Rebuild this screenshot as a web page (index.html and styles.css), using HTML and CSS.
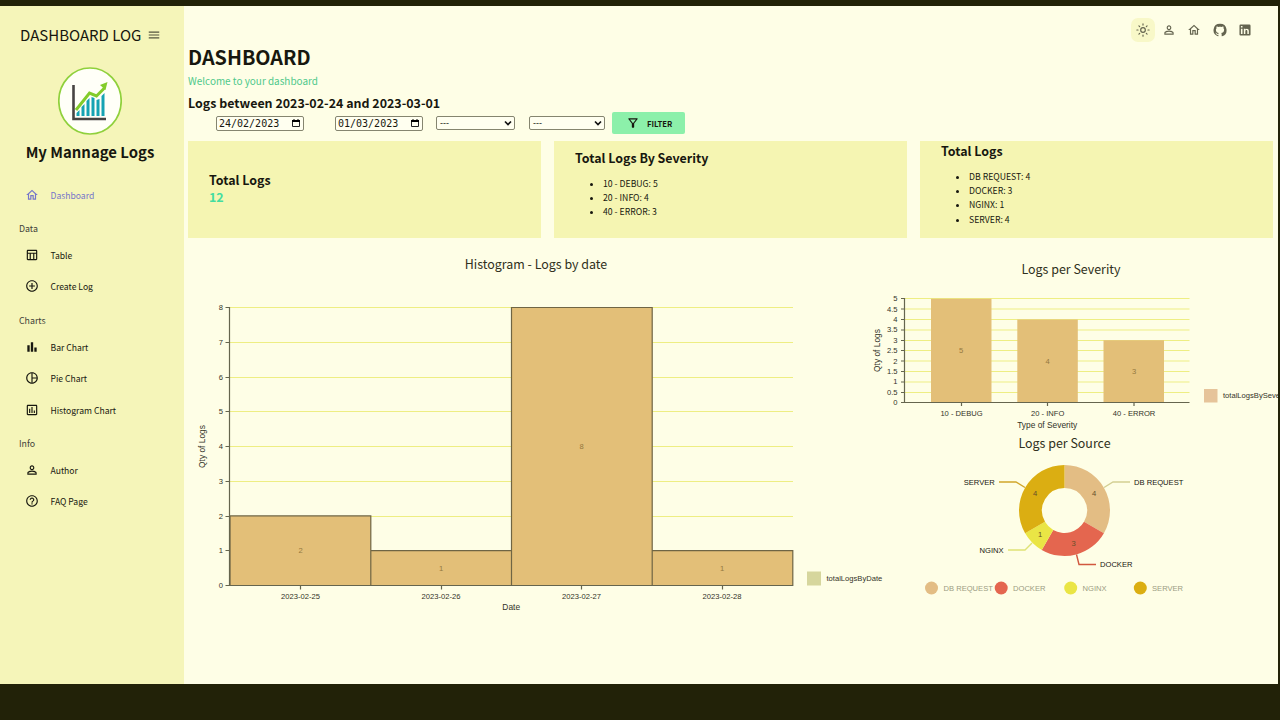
FILE: index.html
```html
<!DOCTYPE html>
<html lang="en">
<head>
<meta charset="utf-8">
<title>Dashboard Log</title>
<link rel="stylesheet" href="styles.css">
</head>
<body>
<svg class="defs" width="0" height="0">
  <symbol id="home" viewBox="0 0 24 24"><path d="m12 5.69 5 4.5V18h-2v-6H9v6H7v-7.81l5-4.5M12 3 2 12h3v8h6v-6h2v6h6v-8h3L12 3z"/></symbol>
  <symbol id="person" viewBox="0 0 24 24"><path d="M12 5.9a2.1 2.1 0 1 1 0 4.2 2.1 2.1 0 0 1 0-4.2m0 9c2.97 0 6.1 1.46 6.1 2.1v1.1H5.9V17c0-.64 3.13-2.1 6.1-2.1M12 4C9.79 4 8 5.79 8 8s1.79 4 4 4 4-1.79 4-4-1.79-4-4-4zm0 9c-2.67 0-8 1.34-8 4v3h16v-3c0-2.66-5.33-4-8-4z"/></symbol>
</svg>
<div class="screen">
  <aside class="sidebar">
    <div class="brand"><span>DASHBOARD LOG</span>
      <svg class="icon burger" viewBox="0 0 24 24"><path d="M3 18h18v-2H3v2zm0-5h18v-2H3v2zm0-7v2h18V6H3z"/></svg>
    </div>
    <svg class="logo" viewBox="0 0 64 68">
      <ellipse cx="32" cy="34" rx="31.2" ry="33" fill="#fffff8" stroke="#8fd03c" stroke-width="1.7"/>
      <path d="M15.5 18v34H48" fill="none" stroke="#474443" stroke-width="2.6"/>
      <path d="M18.5 46l3-3v6h-3zM23.500 40l3-3v12h-3zM28.500 34l3-3v18h-3zM33.500 30l3 1v18h-3zM38.500 33l3-1v17h-3zM43.500 29l3-3v23h-3z" fill="#16a3b3"/>
      <path d="M18 43 31.500 26l7 3 8-8" fill="none" stroke="#83cc2b" stroke-width="3"/>
      <path d="m42 18 7.500-3-2 8z" fill="#83cc2b"/>
    </svg>
    <div class="owner">My Mannage Logs</div>
    <nav class="menu">
      <a class="item active"><svg class="icon"><use href="#home"/></svg>Dashboard</a>
      <h6>Data</h6>
      <a class="item"><svg class="icon" viewBox="0 0 24 24"><path d="M19 3H5c-1.100 0-2 .9-2 2v14c0 1.100.9 2 2 2h14c1.100 0 2-.9 2-2V5c0-1.100-.9-2-2-2zm0 2v3H5V5h14zm-9 14v-9h4v9h-4zm-5-9h3v9H5v-9zm11 9v-9h3v9h-3z"/></svg>Table</a>
      <a class="item"><svg class="icon" viewBox="0 0 24 24"><path d="M13 7h-2v4H7v2h4v4h2v-4h4v-2h-4V7zm-1-5C6.480 2 2 6.480 2 12s4.480 10 10 10 10-4.480 10-10S17.520 2 12 2zm0 18c-4.410 0-8-3.590-8-8s3.590-8 8-8 8 3.590 8 8-3.590 8-8 8z"/></svg>Create Log</a>
      <h6>Charts</h6>
      <a class="item"><svg class="icon" viewBox="0 0 24 24"><path d="M4 9h4v11H4zm12 4h4v7h-4zm-6-9h4v16h-4z"/></svg>Bar Chart</a>
      <a class="item"><svg class="icon" viewBox="0 0 24 24"><path d="M12 2C6.480 2 2 6.480 2 12s4.480 10 10 10 10-4.480 10-10S17.520 2 12 2zm1 2.070c3.610.45 6.480 3.330 6.930 6.930H13V4.070zM4 12c0-4.060 3.070-7.440 7-7.930v15.870c-3.930-.5-7-3.880-7-7.940zm9 7.930V13h6.930c-.45 3.610-3.320 6.480-6.930 6.930z"/></svg>Pie Chart</a>
      <a class="item"><svg class="icon" viewBox="0 0 24 24"><path d="M9 17H7v-7h2v7zm4 0h-2V7h2v10zm4 0h-2v-4h2v4zm2 2H5V5h14v14zm0-16H5c-1.100 0-2 .9-2 2v14c0 1.100.9 2 2 2h14c1.100 0 2-.9 2-2V5c0-1.100-.9-2-2-2z"/></svg>Histogram Chart</a>
      <h6>Info</h6>
      <a class="item"><svg class="icon"><use href="#person"/></svg>Author</a>
      <a class="item"><svg class="icon" viewBox="0 0 24 24"><path d="M11 18h2v-2h-2v2zm1-16C6.480 2 2 6.480 2 12s4.480 10 10 10 10-4.480 10-10S17.520 2 12 2zm0 18c-4.410 0-8-3.590-8-8s3.590-8 8-8 8 3.590 8 8-3.590 8-8 8zm0-14c-2.210 0-4 1.790-4 4h2c0-1.100.9-2 2-2s2 .9 2 2c0 2-3 1.750-3 5h2c0-2.250 3-2.500 3-5 0-2.210-1.790-4-4-4z"/></svg>FAQ Page</a>
    </nav>
  </aside>
  <main class="content">
    <div class="topbar">
      <span class="tool on"><svg class="icon" viewBox="0 0 24 24" fill="none" stroke="currentColor" stroke-width="2" stroke-linecap="round"><circle cx="12" cy="12" r="4"/><path d="M12 1.500v2M12 20.500v2M1.500 12h2M20.500 12h2M5 5l1.300 1.300M17.700 17.700 19 19M5 19l1.300-1.300M17.700 6.300 19 5"/></svg></span>
      <span class="tool"><svg class="icon"><use href="#person"/></svg></span>
      <span class="tool"><svg class="icon"><use href="#home"/></svg></span>
      <span class="tool"><svg class="icon" viewBox="0 0 24 24"><path d="M12 1.270a11 11 0 0 0-3.480 21.460c.55.090.73-.28.73-.55v-1.840c-3.030.64-3.670-1.460-3.670-1.460-.55-1.290-1.280-1.650-1.280-1.650-.92-.65.1-.65.1-.65 1.100 0 1.730 1.100 1.730 1.100.92 1.650 2.570 1.200 3.210.92a2 2 0 0 1 .64-1.470c-2.470-.27-5.040-1.190-5.040-5.500 0-1.100.46-2.100 1.200-2.840a3.760 3.760 0 0 1 0-2.930s.91-.28 3.110 1.100c1.800-.49 3.700-.49 5.500 0 2.100-1.380 3.020-1.100 3.020-1.100a3.760 3.760 0 0 1 .1 2.930c.83.74 1.200 1.740 1.200 2.940 0 4.210-2.570 5.130-5.040 5.400.45.370.82.920.82 2.020v3.030c0 .27.1.64.73.550A11 11 0 0 0 12 1.270"/></svg></span>
      <span class="tool"><svg class="icon" viewBox="0 0 24 24"><path fill-rule="evenodd" d="M4.500 2.500h15a2 2 0 0 1 2 2v15a2 2 0 0 1-2 2h-15a2 2 0 0 1-2-2v-15a2 2 0 0 1 2-2zM5 10v9h2.700v-9zM5 5v2.700h2.700V5zm5 5v9h2.600v-5c0-2.600 3.400-2.600 3.400 0v5h2.600v-5.500c0-4-4.300-4.600-6-2.400V10z"/></svg></span>
    </div>
    <h1>DASHBOARD</h1>
    <p class="welcome">Welcome to your dashboard</p>
    <h2>Logs between 2023-02-24 and 2023-03-01</h2>
    <div class="filters">
      <div class="date"><span>24/02/2023</span><svg viewBox="0 0 8 8"><path d="M.5 1.500h7v6h-7z" fill="none" stroke="#222"/><path d="M0 1h8v2H0zM1.500 0h1v1h-1zM5.500 0h1v1h-1z"/></svg></div>
      <div class="date second"><span>01/03/2023</span><svg viewBox="0 0 8 8"><path d="M.5 1.500h7v6h-7z" fill="none" stroke="#222"/><path d="M0 1h8v2H0zM1.500 0h1v1h-1zM5.500 0h1v1h-1z"/></svg></div>
      <div class="select wide"><span>---</span><svg viewBox="0 0 8 6"><path d="m1 1.500 3 3 3-3" fill="none" stroke="#111" stroke-width="1.700"/></svg></div>
      <div class="select"><span>---</span><svg viewBox="0 0 8 6"><path d="m1 1.500 3 3 3-3" fill="none" stroke="#111" stroke-width="1.700"/></svg></div>
      <div class="button"><svg class="icon" viewBox="0 0 24 24"><path d="M7 6h10l-5.010 6.300L7 6zm-2.750-.390C6.270 8.200 10 13 10 13v6c0 .55.45 1 1 1h2c.55 0 1-.45 1-1v-6s3.720-4.800 5.740-7.390c.51-.66.040-1.610-.79-1.610H5.040c-.83 0-1.300.95-.79 1.610z"/></svg>FILTER</div>
    </div>
    <section class="cards">
      <div class="card"><h3>Total Logs</h3><b class="count">12</b></div>
      <div class="card"><h3>Total Logs By Severity</h3><ul><li>10 - DEBUG: 5</li><li>20 - INFO: 4</li><li>40 - ERROR: 3</li></ul></div>
      <div class="card"><h3>Total Logs</h3><ul><li>DB REQUEST: 4</li><li>DOCKER: 3</li><li>NGINX: 1</li><li>SERVER: 4</li></ul></div>
    </section>
    <section class="charts">
      <div class="histogram">
        <h4>Histogram - Logs by date</h4>
        <svg class="plot" width="680" height="347" viewBox="188 273 680 347">
          <path class="grid" d="M230 307.500h563M230 342.500h563M230 377.500h563M230 411.500h563M230 446.500h563M230 481.500h563M230 516.500h563M230 550.500h563"/>
          <g class="bars outlined"><path d="M230 515.900h140.800v69.600H230zM370.800 550.700h140.700v34.800H370.800zM511.500 307.500h140.700v278H511.500zM652.200 550.700h140.600v34.800H652.200z"/></g>
          <path class="axis" d="M229.500 307v278.500H793M225.500 307.500h4M225.500 342.500h4M225.500 377.500h4M225.500 411.500h4M225.500 446.500h4M225.500 481.500h4M225.500 516.500h4M225.500 550.500h4M225.500 585.500h4M300.500 586v3.500M441.500 586v3.500M581.500 586v3.500M722.500 586v3.500"/>
          <g class="end"><text x="223" y="310.200">8</text><text x="223" y="345">7</text><text x="223" y="379.800">6</text><text x="223" y="414.400">5</text><text x="223" y="449.200">4</text><text x="223" y="484">3</text><text x="223" y="518.800">2</text><text x="223" y="553.400">1</text><text x="223" y="588.200">0</text></g>
          <g class="mid"><text x="300.500" y="599">2023-02-25</text><text x="441" y="599">2023-02-26</text><text x="581.500" y="599">2023-02-27</text><text x="722" y="599">2023-02-28</text></g>
          <g class="mid value"><text x="300.500" y="553.200">2</text><text x="441" y="570.700">1</text><text x="581.500" y="449.200">8</text><text x="722" y="570.700">1</text></g>
          <g class="mid legend"><text x="511.200" y="610">Date</text><text transform="translate(205 446.500) rotate(-90)">Qty of Logs</text></g>
          <path fill="#d6d69d" d="M807 571.500h14v14h-14z"/><text x="826.500" y="581.200">totalLogsByDate</text>
        </svg>
      </div>
      <div class="side">
        <h4>Logs per Severity</h4>
        <svg class="plot" width="410" height="156" viewBox="868 278 410 156">
          <path class="grid" d="M905 298.500h284.500M905 309h284.500M905 319.500h284.500M905 330h284.500M905 340.500h284.500M905 350.500h284.500M905 361h284.500M905 371.500h284.500M905 382h284.500M905 392.500h284.500"/>
          <g class="bars"><path d="M931 298.800h60.500v104H931zM1017.300 319.500h60.500v83.300h-60.500zM1103.500 340.300h60.500v62.500h-60.500z"/></g>
          <path class="axis" d="M904.500 298v104.500h285M901 298.500h4M901 309h4M901 319.500h4M901 330h4M901 340.500h4M901 350.500h4M901 361h4M901 371.500h4M901 382h4M901 392.500h4M901 402.500h4M961.500 403v3M1047.500 403v3M1134 403v3"/>
          <g class="end"><text x="897.500" y="301.200">5</text><text x="897.500" y="311.600">4.5</text><text x="897.500" y="322">4</text><text x="897.500" y="332.400">3.5</text><text x="897.500" y="342.800">3</text><text x="897.500" y="353.200">2.5</text><text x="897.500" y="363.600">2</text><text x="897.500" y="374">1.5</text><text x="897.500" y="384.400">1</text><text x="897.500" y="394.800">0.5</text><text x="897.500" y="405.200">0</text></g>
          <g class="mid"><text x="961.500" y="416.300">10 - DEBUG</text><text x="1047.700" y="416.300">20 - INFO</text><text x="1134" y="416.300">40 - ERROR</text></g>
          <g class="mid value"><text x="961.200" y="353.200">5</text><text x="1047.500" y="363.600">4</text><text x="1134" y="374">3</text></g>
          <g class="mid legend"><text x="1047.200" y="427.600">Type of Severity</text><text transform="translate(879.500 350.500) rotate(-90)">Qty of Logs</text></g>
          <path fill="#e6c49a" d="M1204 389h13.500v13.500H1204z"/><text x="1223" y="398.400">totalLogsBySeverity</text>
        </svg>
        <h4 class="source">Logs per Source</h4>
        <svg class="plot" width="410" height="152" viewBox="868 452 410 152">
          <path fill="#e3bd84" d="M1064.500 465A45.500 45.500 0 0 1 1103.900 533.250L1084 521.750A22.500 22.500 0 0 0 1064.500 488z"/>
          <path fill="#e4664f" d="M1103.900 533.250A45.500 45.500 0 0 1 1041.750 549.900L1053.250 530A22.500 22.500 0 0 0 1084 521.750z"/>
          <path fill="#eae545" d="M1041.750 549.900A45.500 45.500 0 0 1 1025.100 533.250L1045 521.750A22.500 22.500 0 0 0 1053.250 530z"/>
          <path fill="#dbae12" d="M1025.100 533.250A45.500 45.500 0 0 1 1064.500 465V488A22.500 22.500 0 0 0 1045 521.750z"/>
          <g fill="none" stroke-width="1.400"><path stroke="#d3cf93" d="M1104 487.500l9-5.500h17"/><path stroke="#d1583f" d="M1076.500 554.500l2.500 10h17"/><path stroke="#dfe276" d="M1032 543l-7 7h-17"/><path stroke="#d1a62b" d="M1025 487.500l-9-5.500h-17"/></g>
          <g class="dark"><text x="1134" y="484.700">DB REQUEST</text><text x="1100" y="567.300">DOCKER</text><text x="979.500" y="552.700">NGINX</text><text x="963.700" y="484.700">SERVER</text></g>
          <g class="mid slice"><text x="1094" y="496.300">4</text><text x="1073.500" y="545.800">3</text><text x="1040" y="536.800">1</text><text x="1035" y="496.300">4</text></g>
          <circle cx="931.500" cy="588" r="6.500" fill="#e3bd84"/><circle cx="1001.200" cy="588" r="6.500" fill="#e4664f"/><circle cx="1070.700" cy="588" r="6.500" fill="#eae545"/><circle cx="1140.300" cy="588" r="6.500" fill="#dbae12"/>
          <g class="muted"><text x="943.500" y="590.800">DB REQUEST</text><text x="1013" y="590.800">DOCKER</text><text x="1082.500" y="590.800">NGINX</text><text x="1152" y="590.800">SERVER</text></g>
        </svg>
      </div>
    </section>
  </main>
</div>
</body>
</html>
```
FILE: styles.css
```css
* { box-sizing: border-box; margin: 0; padding: 0; }
body {
  width: 1280px;
  height: 720px;
  overflow: hidden;
  padding: 6px 2px 36px 0;
  background: #222208;
  color: #17170f;
  font-family: "Noto Sans CJK JP", "Noto Sans", sans-serif;
}
.defs { display: block; height: 0; }
.screen { display: flex; height: 678px; background: #fefee6; overflow: hidden; }
.icon { width: 14px; height: 14px; fill: currentColor; flex: none; }
.icon[fill="none"] { fill: none; }

.sidebar { width: 184px; flex: none; background: #f5f5b9; padding-top: 19px; }
.brand { display: flex; align-items: center; height: 20px; padding-left: 20px; font-size: 15px; line-height: 20px; white-space: nowrap; }
.brand span { width: 127px; }
.burger { color: #55553f; }
.logo { display: block; width: 64px; height: 68px; margin: 22px 0 0 58px; }
.owner { width: 180px; margin-top: 7px; text-align: center; font-size: 14.9px; font-weight: 700; line-height: 20px; }
.menu { margin-top: 17px; }
.item { display: flex; align-items: center; height: 31.3px; padding-left: 24.5px; font-size: 8.6px; line-height: 14px; }
.item .icon { margin-right: 12px; }
.active { color: #7575ca; }
.menu h6 { height: 29.2px; padding: 10.2px 0 0 19px; font-size: 8.8px; font-weight: 400; line-height: 17px; color: #42423a; }

.content { flex: 1; min-width: 0; padding-left: 4px; }
.topbar { display: flex; justify-content: flex-end; gap: 1.4px; height: 38px; padding: 12px 21px 0 0; }
.tool { display: grid; place-items: center; width: 24px; height: 24px; color: #64644f; border-radius: 7px; }
.on { background: #f8f8c8; }
h1 { font-size: 19.8px; line-height: 26px; }
.welcome { margin-top: 3px; font-size: 9.95px; line-height: 16px; color: #4fc98b; }
h2 { margin-top: 5px; font-size: 12.45px; line-height: 18px; }
.filters { display: flex; align-items: center; height: 22px; padding-left: 28px; }
.date, .select { display: flex; align-items: center; justify-content: space-between; border: 1px solid #85856f; border-radius: 2px; background: #fffff0; }
.date { width: 88px; height: 15px; padding: 0 3px 0 2px; font: 10px "DejaVu Sans Mono", monospace; }
.date svg { width: 8px; height: 8px; }
.second { margin-left: 31px; }
.select { width: 76px; height: 14px; padding: 0 2px 0 3px; margin: 0 0 1px 14px; font: 9px "Liberation Sans", sans-serif; }
.select.wide { width: 79px; margin-left: 13px; }
.select svg { width: 8px; height: 6px; }
.button { display: flex; align-items: center; width: 73px; height: 22px; margin-left: 7px; padding-left: 14px; gap: 7px; border-radius: 2px; background: #8cf0aa; font-size: 7.7px; font-weight: 700; }

.cards { display: grid; grid-template-columns: repeat(3, 353px); gap: 13px; height: 97px; margin-top: 7px; }
.card { display: flex; flex-direction: column; justify-content: center; padding: 0 0 1px 21px; background: #f5f5b2; }
.card h3, .count { font-size: 12.45px; line-height: 17px; }
.count { color: #43dda0; }
.card ul { margin: 9.5px 0 8px; padding-left: 28px; font-size: 8.7px; line-height: 14.3px; }

.charts { display: flex; }
.histogram { width: 680px; padding-top: 17px; }
.side { width: 410px; padding-top: 22px; }
h4 { font-size: 12.45px; font-weight: 400; line-height: 18px; text-align: center; color: #303020; }
.histogram h4 { padding-left: 16px; }
.side h4 { padding-right: 4px; }
.side .source { padding-right: 17px; }
.plot { display: block; overflow: visible; font: 7.6px "Liberation Sans", sans-serif; fill: #333328; }
.grid { stroke: #eeee83; stroke-width: 1; }
.axis { fill: none; stroke: #65654e; stroke-width: 1.2; }
.bars { fill: #e3bf78; }
.outlined { stroke: #6f6544; stroke-width: 1.2; }
.end { text-anchor: end; }
.mid { text-anchor: middle; }
.value { fill: #94783f; }
.slice { fill: #66502a; }
.legend { font-size: 8.4px; }
.dark { fill: #16160f; }
.muted { fill: #9c9c82; }
```
